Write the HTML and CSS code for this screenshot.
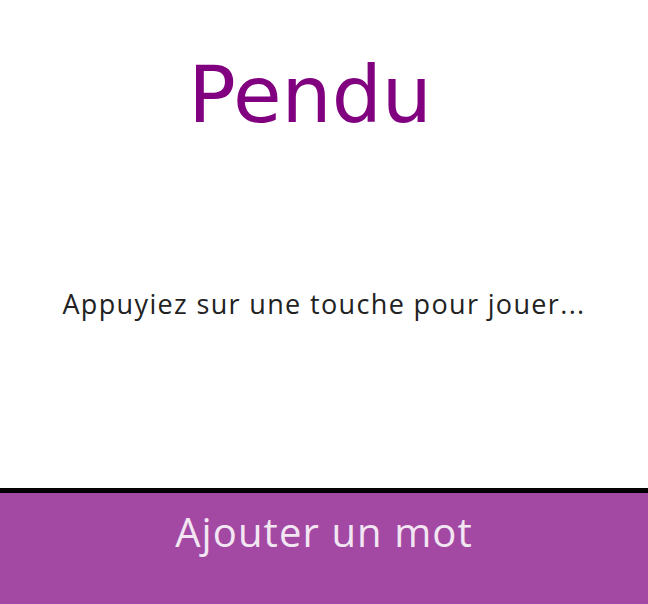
FILE: index.html
```html
<!DOCTYPE html>
<html lang="fr">
<head>
<meta charset="utf-8">
<title>Pendu</title>
<link rel="stylesheet" href="styles.css">
</head>
<body>
<div class="page">
  <header class="title-wrap">
    <h1 class="title">Pendu</h1>
  </header>
  <main class="stage">
    <p class="message">Appuyiez sur une touche pour jouer...</p>
  </main>
  <footer class="footer">
    <button class="add-btn" type="button">Ajouter un mot</button>
  </footer>
</div>
</body>
</html>
```

FILE: styles.css
```css
html, body {
  margin: 0;
  padding: 0;
  background: #ffffff;
}
.page {
  width: 648px;
  height: 604px;
  display: flex;
  flex-direction: column;
  overflow: hidden;
}
.title-wrap {
  padding: 48px 28px 0 0;
  text-align: center;
}
.title {
  margin: 0;
  font-family: "DejaVu Sans", sans-serif;
  font-weight: normal;
  font-size: 79px;
  line-height: 95px;
  color: #800080;
}
.stage {
  flex: 1;
  display: flex;
  justify-content: center;
  padding-top: 143px;
}
.message {
  margin: 0;
  font-family: "Open Sans", sans-serif;
  font-size: 27px;
  letter-spacing: 1.35px;
  line-height: 36px;
  color: #222222;
}
.footer {
  height: 111px;
  border-top: 5px solid #000000;
  background: #a349a4;
  display: flex;
  justify-content: center;
  align-items: flex-start;
}
.add-btn {
  margin: 14px 0 0 0;
  padding: 0;
  border: 0;
  background: transparent;
  font-family: "Open Sans", sans-serif;
  font-size: 40px;
  letter-spacing: 1.1px;
  line-height: 50px;
  color: #f3e6f3;
}
```
